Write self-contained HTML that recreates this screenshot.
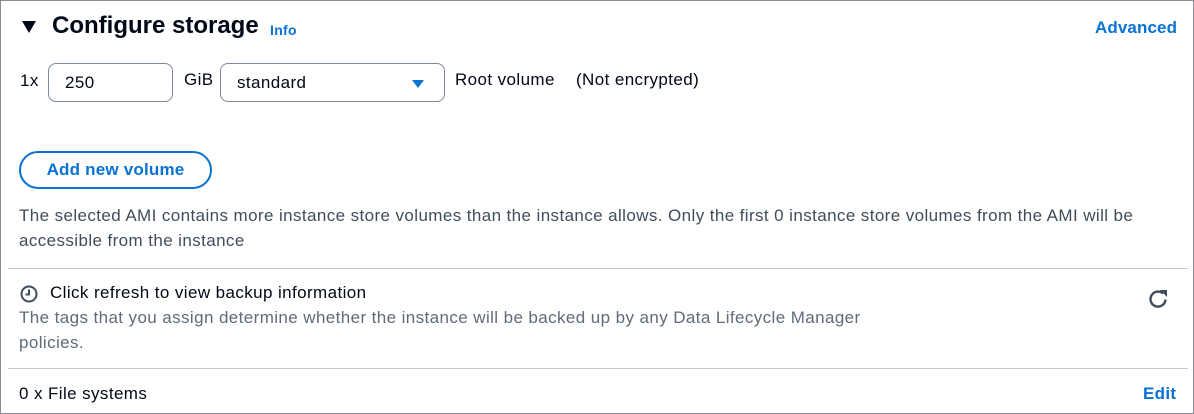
<!DOCTYPE html>
<html><head><meta charset="utf-8"><style>
html,body{margin:0;padding:0;background:#fff;}
body{width:1194px;height:414px;position:relative;overflow:hidden;font-family:"Liberation Sans",sans-serif;color:#000716;}
.frame{position:absolute;left:0;top:0;width:1192px;height:412px;border:1px solid #8c8c94;}
.a{position:absolute;white-space:nowrap;}
.t16{font-size:17px;letter-spacing:0.4px;}
.box{position:absolute;border:1.5px solid #7d8998;border-radius:8px;box-sizing:border-box;}
.hr{position:absolute;left:8px;right:6px;height:1px;background:#c6c6cd;}
.link{color:#0972d3;font-weight:bold;}
</style></head><body>
<div class="frame"></div>
<svg class="a" style="left:21px;top:20px" width="16" height="14"><polygon points="1,1 15,1 8,13" fill="#000716"/></svg>
<div class="a" style="left:52px;top:12px;font-size:24px;font-weight:bold;letter-spacing:0px">Configure storage</div>
<div class="a link" style="left:270px;top:22px;font-size:14px;letter-spacing:0.3px">Info</div>
<div class="a link" style="left:1095px;top:18px;font-size:17px;letter-spacing:0.1px">Advanced</div>

<div class="a t16" style="left:20px;top:71px">1x</div>
<div class="box" style="left:48px;top:63px;width:125px;height:39px"></div>
<div class="a t16" style="left:65px;top:73px">250</div>
<div class="a t16" style="left:184px;top:70px">GiB</div>
<div class="box" style="left:220px;top:63px;width:225px;height:39px"></div>
<div class="a t16" style="left:237px;top:73px">standard</div>
<svg class="a" style="left:411px;top:79px" width="14" height="10"><polygon points="1,1 13,1 7,9" fill="#0972d3"/></svg>
<div class="a t16" style="left:455px;top:70px">Root volume</div>
<div class="a t16" style="left:576px;top:70px">(Not encrypted)</div>

<div class="a" style="left:19px;top:151px;width:193px;height:38px;border:2px solid #0972d3;border-radius:20px;box-sizing:border-box"></div>
<div class="a link" style="left:19px;top:160px;width:193px;text-align:center;font-size:17px;letter-spacing:0.2px">Add new volume</div>

<div class="a t16" style="left:19px;top:206px;color:#414d5c">The selected AMI contains more instance store volumes than the instance allows. Only the first 0 instance store volumes from the AMI will be</div>
<div class="a t16" style="left:19px;top:231px;color:#414d5c">accessible from the instance</div>

<div class="hr" style="top:268px"></div>
<svg class="a" style="left:19px;top:284px" width="20" height="20"><circle cx="10" cy="10" r="7.5" fill="none" stroke="#414d5c" stroke-width="2"/><path d="M10 5.5V10.5H6.5" fill="none" stroke="#414d5c" stroke-width="2"/></svg>
<div class="a t16" style="left:50px;top:283px">Click refresh to view backup information</div>
<div class="a t16" style="left:19px;top:308px;color:#5f6b7a">The tags that you assign determine whether the instance will be backed up by any Data Lifecycle Manager</div>
<div class="a t16" style="left:19px;top:333px;color:#5f6b7a">policies.</div>
<svg class="a" style="left:1148px;top:288px" width="22" height="22"><path d="M17.5 11.5A7.5 7.5 0 1 1 15 5.5" fill="none" stroke="#414d5c" stroke-width="2.4"/><polygon points="12,2 19,2 19,9" fill="#414d5c"/></svg>

<div class="hr" style="top:368px"></div>
<div class="a t16" style="left:19px;top:384px">0 x File systems</div>
<div class="a link" style="left:1143px;top:384px;font-size:17px;letter-spacing:0.3px">Edit</div>
</body></html>
